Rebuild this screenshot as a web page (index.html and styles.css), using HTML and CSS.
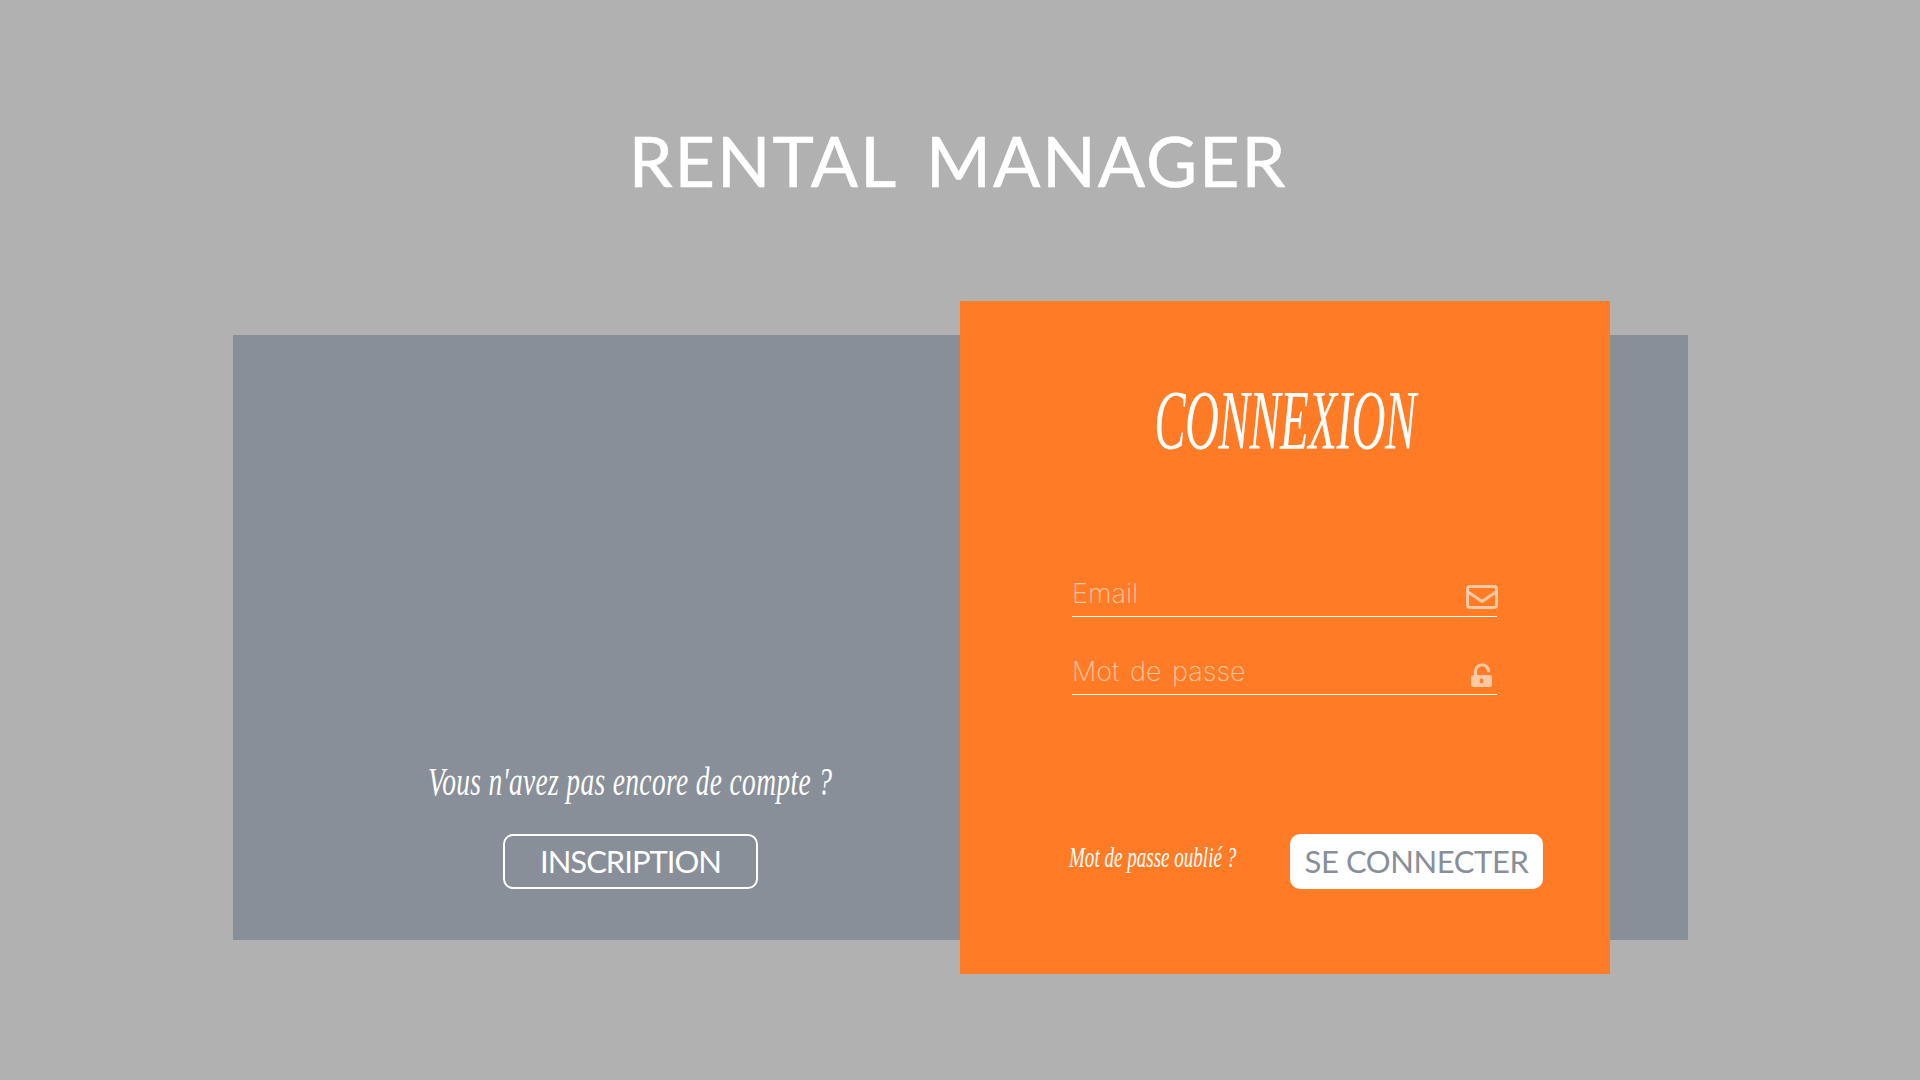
FILE: index.html
```html
<!DOCTYPE html>
<html lang="fr">
<head>
<meta charset="utf-8">
<title>Rental Manager</title>
<link rel="stylesheet" href="styles.css">
</head>
<body>
<main class="page">
  <h1 class="brand">RENTAL MANAGER</h1>
  <section class="stage">
    <div class="signup">
      <p class="signup-text">Vous n'avez pas encore de compte ?</p>
      <a class="btn btn-outline">INSCRIPTION</a>
    </div>
    <form class="login">
      <h2 class="login-title">CONNEXION</h2>
      <div class="field">
        <span class="placeholder">Email</span>
        <svg class="icon icon-mail" viewBox="0 0 32 24" aria-hidden="true"><rect x="1.500" y="1.500" width="29" height="21" rx="2.500" fill="none" stroke="currentColor" stroke-width="3"/><path d="M2 7 L16 16.500 L30 7" fill="none" stroke="currentColor" stroke-width="3"/></svg>
      </div>
      <div class="field field-second">
        <span class="placeholder">Mot de passe</span>
        <svg class="icon icon-lock" viewBox="0 0 21 24" aria-hidden="true"><path fill-rule="evenodd" d="M2.500 12h16a2.500 2.500 0 0 1 2.500 2.500v7a2.500 2.500 0 0 1-2.500 2.500h-16A2.500 2.500 0 0 1 0 21.500v-7A2.500 2.500 0 0 1 2.500 12Zm8 3.500c-1 0-1.800.9-1.800 2.500s.8 2.500 1.800 2.500 1.800-.9 1.800-2.500-.8-2.500-1.800-2.500Z"/><path d="M4.500 12V8.500a6.500 6.500 0 0 1 13-.5" fill="none" stroke="currentColor" stroke-width="3.200" stroke-linecap="round"/></svg>
      </div>
      <div class="login-actions">
        <a class="forgot">Mot de passe oublié ?</a>
        <a class="btn btn-solid">SE CONNECTER</a>
      </div>
    </form>
  </section>
</main>
</body>
</html>
```
FILE: styles.css
```css
* { box-sizing: border-box; }
html, body { margin: 0; height: 100%; }
body { background: #b1b1b1; color: #fff; font-family: "Liberation Sans", Arial, sans-serif; overflow: hidden; }
.page { width: 1920px; height: 1080px; display: flex; flex-direction: column; align-items: center; }
.brand {
  margin: 126px 4px 141px 0;
  font-family: "Lato", sans-serif;
  font-weight: 400;
  font-size: 70px;
  line-height: 68px;
  letter-spacing: 2px;
  word-spacing: 10px;
  white-space: nowrap;
  -webkit-text-stroke: .6px #fff;
}
.stage {
  width: 1455px;
  height: 605px;
  margin-left: 1px;
  background: #888f98;
  display: flex;
  align-items: flex-start;
}
.signup {
  width: 727px;
  height: 605px;
  display: flex;
  flex-direction: column;
  align-items: center;
  padding: 423px 0 0 68px;
}
.signup-text {
  margin: 0;
  font-family: "Liberation Serif", serif;
  font-style: italic;
  font-size: 40px;
  line-height: 48px;
  height: 76px;
  white-space: nowrap;
  letter-spacing: .5px;
  transform: scaleX(.687);
}
.btn {
  display: flex;
  align-items: center;
  justify-content: center;
  height: 55px;
  padding-bottom: 2px;
  border-radius: 10px;
  font-family: "Lato", sans-serif;
  font-size: 31px;
  white-space: nowrap;
}
.btn-outline { width: 255px; border: 2px solid #fff; color: #fff; letter-spacing: -1px; }
.btn-solid { width: 253px; background: #fff; color: #888f98; letter-spacing: -.4px; }
.login {
  width: 650px;
  height: 673px;
  margin-top: -34px;
  background: #ff7b26;
  display: flex;
  flex-direction: column;
  padding: 0 112px;
}
.login-title {
  margin: 78px -60px 0;
  height: 180px;
  text-align: center;
  font-family: "Liberation Serif", serif;
  font-style: italic;
  font-weight: 400;
  font-size: 84px;
  line-height: 84px;
  letter-spacing: -1px;
  white-space: nowrap;
  transform: scaleX(.56);
}
.field {
  width: 425px;
  height: 58px;
  border-bottom: 1px solid #fff;
  display: flex;
  justify-content: space-between;
  align-items: flex-end;
  color: #ffc9a3;
}
.field-second { height: 78px; }
.placeholder {
  font-family: "Inter", sans-serif;
  font-weight: 200;
  font-size: 27px;
  line-height: 34px;
  padding-bottom: 5px;
  word-spacing: 3px;
}
.icon { display: block; fill: currentColor; flex: none; }
.icon-mail { width: 32px; height: 24px; margin: 0 -1px 7px 0; }
.icon-lock { width: 21px; height: 24px; margin: 0 5px 7px 0; }
.login-actions {
  display: flex;
  align-items: center;
  justify-content: space-between;
  width: 474px;
  height: 55px;
  margin-top: 139px;
  margin-left: -3px;
}
.forgot {
  width: 167px;
  font-family: "Liberation Serif", serif;
  font-style: italic;
  font-size: 30px;
  white-space: nowrap;
  color: #fff;
  padding-bottom: 10px;
  transform: scaleX(.635);
  transform-origin: left center;
}
```
